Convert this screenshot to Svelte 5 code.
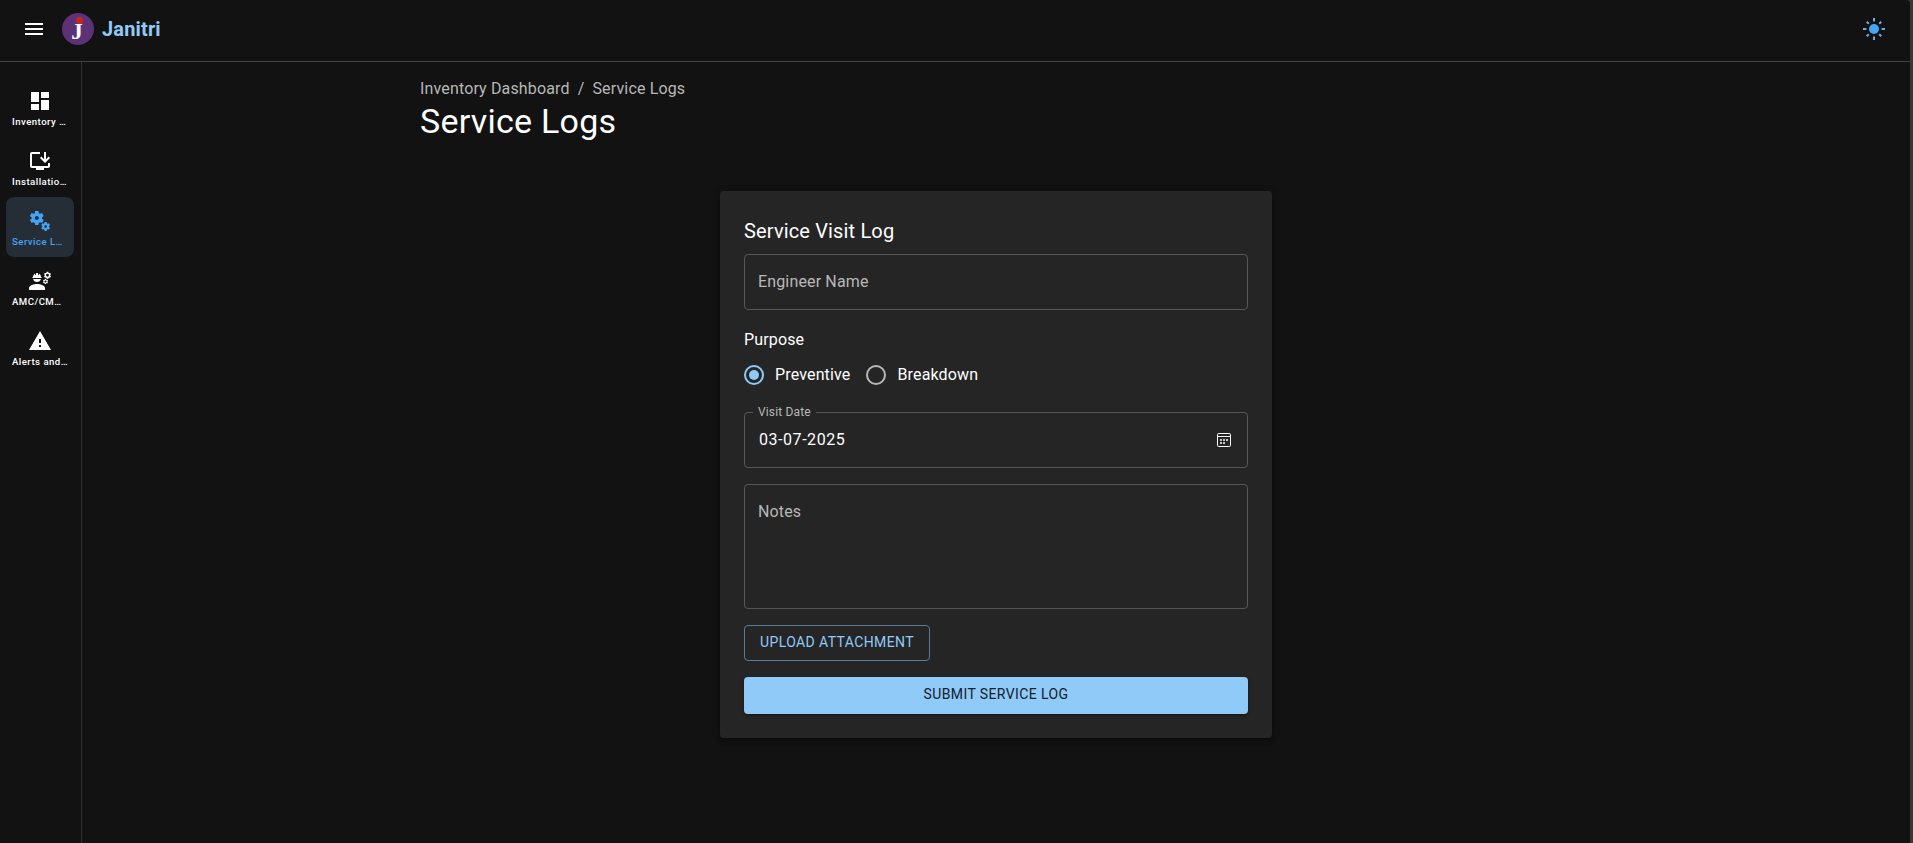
<script>
  const gear = (cx, cy, r) => {
    const pts = [];
    for (let i = 0; i < 6; i++) {
      const a = (i * 60 * Math.PI) / 180;
      for (const [d, k] of [[-0.36, 0.78], [-0.24, 1], [0.24, 1], [0.36, 0.78]]) {
        pts.push(`${(cx + Math.sin(a + d) * r * k).toFixed(2)} ${(cy - Math.cos(a + d) * r * k).toFixed(2)}`);
      }
    }
    const h = r * 0.4;
    return `M${pts.join('L')}ZM${cx - h} ${cy}a${h} ${h} 0 1 0 ${2 * h} 0a${h} ${h} 0 1 0 ${-2 * h} 0Z`;
  };
  const items = [
    { label: 'Inventory …', path: 'M3 13h8V3H3v10zm0 8h8v-6H3v6zm10 0h8V11h-8v10zm0-18v6h8V3h-8z' },
    { label: 'Installatio…', path: 'M20 17H4V5h8V3H4c-1.1 0-2 .9-2 2v12c0 1.1.9 2 2 2h4v2h8v-2h4c1.1 0 2-.9 2-2v-3h-2v3zM17 14l5-5-1.41-1.41L18 10.17V3h-2v7.17l-2.59-2.58L12 9z' },
    { label: 'Service L…', active: true, path: 'M14.17 13.71l1.4-2.42c.09-.15.05-.34-.08-.45l-1.48-1.16c.03-.22.05-.45.05-.68s-.02-.46-.05-.69l1.48-1.16c.13-.11.17-.3.08-.45l-1.4-2.42c-.09-.15-.27-.21-.43-.15l-1.74.7c-.36-.28-.75-.51-1.18-.69l-.26-1.85c-.03-.16-.18-.29-.35-.29h-2.8c-.17 0-.32.13-.35.3L6.8 4.15c-.42.18-.82.41-1.18.69l-1.74-.7c-.16-.06-.34 0-.43.15l-1.4 2.42c-.09.15-.05.34.08.45l1.48 1.16c-.03.22-.05.45-.05.68s.02.46.05.69l-1.48 1.16c-.13.11-.17.3-.08.45l1.4 2.42c.09.15.27.21.43.15l1.74-.7c.36.28.75.51 1.18.69l.26 1.85c.03.16.18.29.35.29h2.8c.17 0 .32-.13.35-.3l.26-1.85c.42-.18.82-.41 1.18-.69l1.74.7c.16.06.34 0 .43-.15zM8.81 11c-1.1 0-2-.9-2-2s.9-2 2-2 2 .9 2 2-.9 2-2 2zM21.92 18.67l-.96-.74c.02-.14.04-.29.04-.44 0-.15-.01-.3-.04-.44l.95-.74c.08-.07.11-.19.05-.29l-.9-1.55c-.05-.1-.17-.13-.28-.1l-1.11.44c-.23-.18-.48-.33-.76-.44l-.17-1.18c-.01-.12-.11-.2-.21-.2h-1.79c-.11 0-.21.08-.22.19l-.17 1.18c-.27.12-.53.26-.76.44l-1.11-.44c-.1-.04-.22 0-.28.1l-.9 1.55c-.05.1-.04.22.05.29l.95.74c-.02.14-.03.29-.03.44 0 .15.01.3.03.44l-.95.74c-.08.07-.11.19-.05.29l.9 1.55c.05.1.17.13.28.1l1.11-.44c.23.18.48.33.76.44l.17 1.18c.02.11.11.19.22.19h1.79c.11 0 .21-.08.22-.19l.17-1.18c.27-.12.53-.26.75-.44l1.12.44c.1.04.22 0 .28-.1l.9-1.55c.06-.09.03-.21-.05-.28zm-4.29.16c-.74 0-1.35-.6-1.35-1.35s.6-1.35 1.35-1.35 1.35.6 1.35 1.35-.61 1.35-1.35 1.35z' },
    { label: 'AMC/CM…', path: 'M9 15c-2.67 0-8 1.34-8 4v2h16v-2c0-2.66-5.33-4-8-4zM4.74 9h8.52c.27 0 .49-.22.49-.49v-.02c0-.27-.22-.49-.49-.49H13c0-1.48-.81-2.75-2-3.45v.95c0 .28-.22.5-.5.5s-.5-.22-.5-.5V4.14C9.68 4.06 9.35 4 9 4s-.68.06-1 .14V5.5c0 .28-.22.5-.5.5S7 5.78 7 5.5v-.95C5.81 5.25 5 6.52 5 8h-.26c-.27 0-.49.22-.49.49v.03c0 .26.22.48.49.48zM5.1 10h7.8c-.4 1.8-2 3-3.9 3s-3.5-1.2-3.9-3z' + gear(19.5, 6.3, 3.6) + gear(17.5, 12.5, 2.6) },
    { label: 'Alerts and…', path: 'M1 21h22L12 2 1 21zm12-3h-2v-2h2v2zm0-4h-2v-4h2v4z' }
  ];
  let purpose = $state('Preventive');
</script>

<div class="page">
  <header>
    <button class="menu" aria-label="Menu">
      <svg viewBox="0 0 24 24"><path d="M3 18h18v-2H3v2zm0-5h18v-2H3v2zm0-7v2h18V6H3z" /></svg>
    </button>
    <div class="logo"><span class="dot"></span><span class="j">J</span></div>
    <span class="brand">Janitri</span>
    <button class="theme" aria-label="Theme">
      <svg viewBox="0 0 24 24">
        <circle cx="12" cy="12" r="5" />
        <path class="rays" d="M12 1v3.4M12 19.6v3.4M1 12h3.4M19.6 12h3.4M4.7 4.7l2.1 2.1M17.2 17.2l2.1 2.1M4.7 19.3l2.1-2.1M17.2 6.8l2.1-2.1" />
      </svg>
    </button>
  </header>
  <div class="body">
    <nav>
      {#each items as item}
        <div class="item" class:active={item.active}>
          <svg viewBox="0 0 24 24"><path fill-rule="evenodd" d={item.path} /></svg>
          <span>{item.label}</span>
        </div>
      {/each}
    </nav>
    <main>
      <div class="container">
        <div class="crumbs"><span>Inventory Dashboard</span><i>/</i><span>Service Logs</span></div>
        <h1>Service Logs</h1>
        <section class="card">
          <h2>Service Visit Log</h2>
          <div class="field"><span class="hint">Engineer Name</span></div>
          <div class="purpose">Purpose</div>
          <div class="radios">
            {#each ['Preventive', 'Breakdown'] as option}
              <button class="radio" class:checked={purpose === option} onclick={() => (purpose = option)}>
                <svg viewBox="0 0 24 24">
                  <circle class="ring" cx="12" cy="12" r="9" />
                  {#if purpose === option}<circle class="fill" cx="12" cy="12" r="5" />{/if}
                </svg>
                <span>{option}</span>
              </button>
            {/each}
          </div>
          <fieldset>
            <legend>Visit Date</legend>
            <div class="date">
              <span>03-07-2025</span>
              <svg viewBox="0 0 14 14">
                <rect x=".5" y=".5" width="13" height="13" rx="1.3" fill="none" stroke="#fff" />
                <path d="M1 3h12v1H1z" fill="#fff" />
                <path d="M3 6h2v2H3zM6 6h2v2H6zM9 6h2v2H9zM3 9h2v2H3zM6 9h2v2H6z" fill="#c8c8c8" />
              </svg>
            </div>
          </fieldset>
          <div class="field notes"><span class="hint">Notes</span></div>
          <button class="upload">Upload Attachment</button>
          <button class="submit">Submit Service Log</button>
        </section>
      </div>
    </main>
  </div>
</div>

<style>
  :global(body) { margin: 0; background: #383838; }
  .page {
    box-sizing: border-box;
    width: calc(100vw - 3px);
    height: 100vh;
    overflow: hidden;
    display: flex;
    flex-direction: column;
    background: #121212;
    border-top-right-radius: 4px;
    color: #fff;
    font-family: Roboto, sans-serif;
  }
  button { font: inherit; color: inherit; background: none; border: 0; padding: 0; margin: 0; }
  svg { display: block; width: 24px; height: 24px; fill: currentColor; }
  header {
    box-sizing: border-box;
    height: 62px;
    flex: none;
    display: flex;
    align-items: center;
    padding: 0 24px 4px 22px;
    border-bottom: 1px solid #434343;
  }
  .logo {
    width: 32px;
    height: 32px;
    margin: 0 8px 0 16px;
    border-radius: 50%;
    background: #5c3178;
    display: flex;
    flex-direction: column;
    align-items: center;
  }
  .dot { width: 7px; height: 7px; border-radius: 50%; background: #c62814; margin-top: 4px; margin-left: 2px; flex: none; }
  .j { font: bold 23px/20px "Liberation Serif", serif; margin-top: -2px; margin-left: -2px; }
  .brand { font-size: 20px; font-weight: 700; color: #90caf9; line-height: 32px; letter-spacing: .15px; }
  .theme { margin-left: auto; color: #42a5f5; }
  .rays { stroke: #76a9d5; stroke-width: 2; }
  .body { flex: 1; display: flex; min-height: 0; }
  nav {
    box-sizing: border-box;
    width: 82px;
    flex: none;
    padding: 15px 7px 0 6px;
    border-right: 1px solid #303030;
  }
  .item {
    box-sizing: border-box;
    height: 60px;
    padding: 12px 6px 0;
    border-radius: 8px;
    display: flex;
    flex-direction: column;
  }
  .item svg { margin-left: 16px; }
  .item span { font-size: 9.6px; font-weight: 500; line-height: 16px; letter-spacing: .47px; white-space: nowrap; margin-top: 1px; }
  .active { background: #252d36; color: #42a5f5; }
  main { flex: 1; display: flex; justify-content: center; }
  .container { width: 1152px; padding-top: 15px; }
  .crumbs { display: flex; font-size: 16px; line-height: 24px; letter-spacing: .15px; color: #b8b8b8; }
  .crumbs i { font-style: normal; margin: 0 8px; }
  h1 { margin: -1px 0 0; font-size: 34px; font-weight: 400; line-height: 42px; letter-spacing: .25px; }
  .card {
    box-sizing: border-box;
    width: 552px;
    height: 547px;
    margin: 49px auto 0;
    padding: 24px;
    border-radius: 4px;
    background: #252525;
    box-shadow: 0 3px 3px -2px #0003, 0 3px 4px #0002, 0 1px 8px #0002;
    display: flex;
    flex-direction: column;
  }
  h2 { margin: 0 0 7px; font-size: 20px; font-weight: 400; line-height: 32px; letter-spacing: .15px; }
  .field { box-sizing: border-box; height: 56px; border: 1px solid #565656; border-radius: 4px; padding: 15px 13px; font-size: 16px; line-height: 24px; letter-spacing: .15px; }
  .hint { color: #b8b8b8; }
  .purpose { margin-top: 18px; font-size: 16px; line-height: 24px; letter-spacing: .15px; }
  .radios { display: flex; gap: 14px; height: 46px; align-items: center; margin-left: -2px; }
  .radio { display: flex; align-items: center; gap: 9px; font-size: 16px; letter-spacing: .15px; line-height: 24px; }
  .radio svg { color: #b8b8b8; }
  .radio.checked svg { color: #90caf9; }
  .ring { fill: none; stroke: currentColor; stroke-width: 2; }
  fieldset { box-sizing: border-box; min-width: 0; height: 62px; margin: 8px 0 0; padding: 0 12px; border: 1px solid #565656; border-radius: 4px; }
  legend { margin-left: -4px; padding: 0 5px; font-size: 12px; line-height: 13px; letter-spacing: .15px; color: #b8b8b8; }
  .date { display: flex; align-items: center; justify-content: space-between; padding: 9px 4px 0 2px; font-size: 16px; line-height: 24px; letter-spacing: .55px; }
  .date svg { width: 14px; height: 14px; }
  .notes { height: 125px; margin-top: 16px; }
  .upload, .submit { box-sizing: border-box; height: 36px; border-radius: 4px; font-size: 14px; font-weight: 400; letter-spacing: .4px; line-height: 24px; padding-bottom: 2px; text-transform: uppercase; flex: none; }
  .upload { align-self: flex-start; width: 186px; margin-top: 16px; border: 1px solid #5a7b97; color: #90caf9; }
  .submit { height: 37px; padding-bottom: 3px; margin-top: 16px; background: #90caf9; color: #15202a; box-shadow: 0 3px 1px -2px #0003, 0 2px 2px #0002, 0 1px 5px #0002; }
</style>
